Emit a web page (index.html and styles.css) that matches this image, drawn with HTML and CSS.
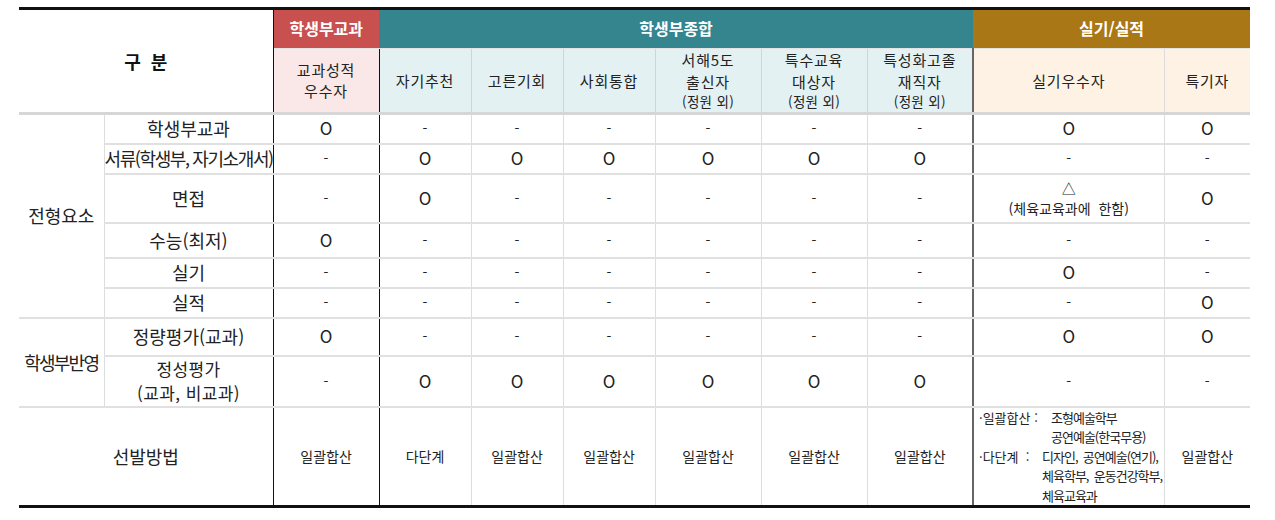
FILE: index.html
```html
<!DOCTYPE html>
<html lang="ko">
<head>
<meta charset="utf-8">
<title>전형요소</title>
<link rel="stylesheet" href="styles.css">
</head>
<body>
<table class="tbl">
  <colgroup>
    <col class="w85"><col class="w169"><col class="w106"><col class="w92"><col class="w92"><col class="w92"><col class="w106"><col class="w106"><col class="w106"><col class="w191"><col class="w86">
  </colgroup>
  <thead>
    <tr class="h1">
      <th class="gubun" colspan="2" rowspan="2">구&nbsp;&nbsp;분</th>
      <th class="band red">학생부교과</th>
      <th class="band teal" colspan="6">학생부종합</th>
      <th class="band gold" colspan="2">실기/실적</th>
    </tr>
    <tr class="h2">
      <th class="sub pink">교과성적<br>우수자</th>
      <th class="sub lt">자기추천</th>
      <th class="sub lt">고른기회</th>
      <th class="sub lt">사회통합</th>
      <th class="sub lt">서해5도<br>출신자<span class="sm">(정원 외)</span></th>
      <th class="sub lt">특수교육<br>대상자<span class="sm">(정원 외)</span></th>
      <th class="sub lt last">특성화고졸<br>재직자<span class="sm">(정원 외)</span></th>
      <th class="sub cream">실기우수자</th>
      <th class="sub cream end">특기자</th>
    </tr>
  </thead>
  <tbody>
    <tr class="r30">
      <td class="grp" rowspan="6">전형요소</td>
      <td class="lab">학생부교과</td>
      <td class="k o">O</td><td class="d">-</td><td class="d">-</td><td class="d">-</td><td class="d">-</td><td class="d">-</td><td class="d last">-</td><td class="o">O</td><td class="o end">O</td>
    </tr>
    <tr class="r30">
      <td class="lab squeeze">서류(학생부, 자기소개서)</td>
      <td class="k d">-</td><td class="o">O</td><td class="o">O</td><td class="o">O</td><td class="o">O</td><td class="o">O</td><td class="o last">O</td><td class="d">-</td><td class="d end">-</td>
    </tr>
    <tr class="r49">
      <td class="lab">면접</td>
      <td class="k d">-</td><td class="o">O</td><td class="d">-</td><td class="d">-</td><td class="d">-</td><td class="d">-</td><td class="d last">-</td><td class="note"><span class="tri">△</span><br>(체육교육과에&nbsp;&nbsp;한함)</td><td class="o end">O</td>
    </tr>
    <tr class="r36">
      <td class="lab">수능(최저)</td>
      <td class="k o">O</td><td class="d">-</td><td class="d">-</td><td class="d">-</td><td class="d">-</td><td class="d">-</td><td class="d last">-</td><td class="d">-</td><td class="d end">-</td>
    </tr>
    <tr class="r30">
      <td class="lab">실기</td>
      <td class="k d">-</td><td class="d">-</td><td class="d">-</td><td class="d">-</td><td class="d">-</td><td class="d">-</td><td class="d last">-</td><td class="o">O</td><td class="d end">-</td>
    </tr>
    <tr class="r30">
      <td class="lab">실적</td>
      <td class="k d">-</td><td class="d">-</td><td class="d">-</td><td class="d">-</td><td class="d">-</td><td class="d">-</td><td class="d last">-</td><td class="d">-</td><td class="o end">O</td>
    </tr>
    <tr class="r38">
      <td class="grp squeeze2" rowspan="2">학생부반영</td>
      <td class="lab">정량평가(교과)</td>
      <td class="k o">O</td><td class="d">-</td><td class="d">-</td><td class="d">-</td><td class="d">-</td><td class="d">-</td><td class="d last">-</td><td class="o">O</td><td class="o end">O</td>
    </tr>
    <tr class="r50">
      <td class="lab two">정성평가<br>(교과, 비교과)</td>
      <td class="k d">-</td><td class="o">O</td><td class="o">O</td><td class="o">O</td><td class="o">O</td><td class="o">O</td><td class="o last">O</td><td class="d">-</td><td class="d end">-</td>
    </tr>
    <tr class="r99">
      <td class="lab method" colspan="2">선발방법</td>
      <td class="k m">일괄합산</td><td class="m">다단계</td><td class="m">일괄합산</td><td class="m">일괄합산</td><td class="m">일괄합산</td><td class="m">일괄합산</td><td class="m last">일괄합산</td>
      <td class="sel">
        <div class="selgrp">
          <span class="sl l1">·일괄합산 :</span>
          <span class="sv">조형예술학부<br>공연예술(한국무용)</span>
        </div>
        <div class="selgrp">
          <span class="sl l2">·다단계&nbsp;&nbsp;:</span>
          <span class="sv">디자인,&nbsp;&nbsp;공연예술(연기),<br>체육학부,&nbsp;&nbsp;운동건강학부,<br>체육교육과</span>
        </div>
      </td>
      <td class="m end">일괄합산</td>
    </tr>
  </tbody>
</table>
</body>
</html>
```

FILE: styles.css
```css
html, body {
  margin: 0;
  padding: 0;
  background: #ffffff;
}

body {
  padding: 7px 0 0 19px;
  font-family: "Noto Sans CJK KR", "Noto Sans", sans-serif;
  color: #222222;
}

.tbl {
  border-collapse: collapse;
  table-layout: fixed;
  width: 1231px;
  border-top: 3px solid #111111;
  border-bottom: 3px solid #111111;
  line-height: 1.45;
}

.w85 { width: 85px; }
.w169 { width: 169px; }
.w106 { width: 106px; }
.w92 { width: 92px; }
.w191 { width: 191px; }
.w86 { width: 86px; }

th, td {
  padding: 0;
  text-align: center;
  vertical-align: middle;
  font-weight: normal;
  border-right: 1px solid #dddddd;
  border-bottom: 2px solid #e0e0e0;
}

/* header */
.h1 th { height: 38px; }
.h2 th { height: 62px; }

.gubun {
  font-size: 18px;
  font-weight: bold;
  color: #111111;
  border-right: 1px solid #111111;
  border-bottom: 3px solid #d6d6d6;
  background: #ffffff;
}

.band {
  color: #ffffff;
  font-size: 16px;
  font-weight: bold;
  border-right: none;
  border-bottom: 1px solid #e4e4e4;
}
.red { background: #c8504f; }
.teal { background: #34858e; }
.gold { background: #a97715; }

.sub {
  font-size: 15px;
  line-height: 21.5px;
  letter-spacing: 0.8px;
  color: #222222;
  border-bottom: 3px solid #d6d6d6;
  border-right: 1px solid #cfd6d8;
}
.pink { background: #f9e8e7; border-right: 1px solid #111111; }
.lt { background: #e4f1f3; }
.cream { background: #fdf2e3; border-right: 1px solid #dddddd; }
.sub.last { border-right: 2px solid #666666; }
.sub.end, td.end { border-right: none; }

.sm {
  display: block;
  font-size: 13.5px;
  line-height: 19.5px;
  letter-spacing: 0.3px;
}

/* body rows */
.r30 td { height: 28px; }
.r49 td { height: 47px; }
.r36 td { height: 33px; }
.r38 td { height: 36px; }
.r50 td { height: 48px; }
.r99 td { height: 96px; }

.grp {
  font-size: 18px;
  color: #222222;
}
.squeeze2 { letter-spacing: -1.8px; white-space: nowrap; }

.lab {
  font-size: 18px;
  color: #222222;
  border-right: 1px solid #111111;
  white-space: nowrap;
}
.lab.two {
  font-size: 17px;
  letter-spacing: 0.4px;
}
.squeeze { letter-spacing: -1.4px; }

.method { border-right: 1px solid #111111; }

td.k { border-right: 1px solid #111111; }
td.last { border-right: 2px solid #666666; }

.o { font-size: 17px; }
.d { font-size: 14px; }
.m { font-size: 14px; }

.note {
  font-size: 14px;
  line-height: 1.45;
}
.tri { font-size: 14px; }

.sel {
  text-align: left;
  padding-left: 5px;
  font-size: 13px;
  line-height: 19.5px;
  white-space: nowrap;
}
.selgrp {
  display: flex;
}
.sl { flex: none; }
.l1 { width: 72px; }
.l2 { width: 63px; }
.sv { letter-spacing: -1px; }
```
